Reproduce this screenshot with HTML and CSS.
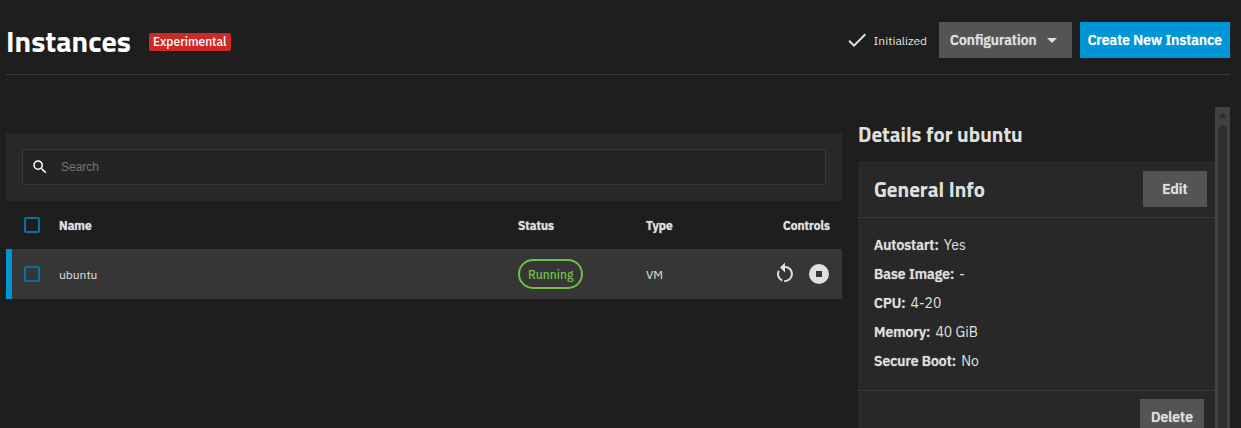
FILE: index.html
```html
<!DOCTYPE html>
<html lang="en">
<head>
  <meta charset="UTF-8" />
  <title>Instances</title>
  <meta name="viewport" content="width=device-width, initial-scale=1.0" />
  <link rel="stylesheet" href="styles.css">
</head>
<body>

<!-- Page header -->
<header class="page-header">
  <h1>Instances</h1>
  <span class="badge">Experimental</span>
  <div class="actions">
    <span class="state">
      <svg class="icon" width="24" height="24" viewBox="0 0 24 24"><path d="M9 16.2 4.8 12l-1.4 1.4L9 19 21 7l-1.4-1.4z"/></svg>
      Initialized
    </span>
    <button type="button" class="btn btn-config">
      Configuration
      <svg class="icon" width="24" height="24" viewBox="0 0 24 24"><path d="M7 10l5 5 5-5z"/></svg>
    </button>
    <button type="button" class="btn btn-primary">Create New Instance</button>
  </div>
</header>

<main class="layout">
  <!-- Instance list -->
  <section class="list">
    <div class="search-bar">
      <label class="search">
        <svg class="icon" width="18" height="18" viewBox="0 0 24 24"><path d="M15.5 14h-.79l-.28-.27A6.471 6.471 0 0 0 16 9.5 6.5 6.5 0 1 0 9.5 16c1.61 0 3.09-.59 4.23-1.57l.27.28v.79l5 4.99L20.49 19l-4.99-5zm-6 0C7.01 14 5 11.99 5 9.5S7.01 5 9.5 5 14 7.01 14 9.5 11.99 14 9.5 14z"/></svg>
        <input type="search" placeholder="Search" aria-label="Search" />
      </label>
    </div>

    <table class="instances">
      <thead>
        <tr>
          <th class="col-check"><input type="checkbox" class="check" aria-label="Select all" /></th>
          <th>Name</th>
          <th class="col-status">Status</th>
          <th class="col-type">Type</th>
          <th class="col-controls">Controls</th>
        </tr>
      </thead>
      <tbody>
        <tr class="selected">
          <td class="col-check"><input type="checkbox" class="check" aria-label="Select ubuntu" /></td>
          <td>ubuntu</td>
          <td class="col-status"><span class="status">Running</span></td>
          <td class="col-type">VM</td>
          <td class="col-controls">
            <div class="controls">
              <button type="button" class="icon-btn" aria-label="Restart">
                <svg class="icon" width="24" height="24" viewBox="0 0 24 24"><path d="M12 4C14.1 4 16.1 4.8 17.6 6.3C20.7 9.4 20.7 14.5 17.6 17.6C15.8 19.5 13.3 20.2 10.9 19.9L11.4 17.9C13.1 18.1 14.9 17.5 16.2 16.2C18.5 13.9 18.5 10.1 16.2 7.7C15.1 6.6 13.5 6 12 6V10.6L7 5.6L12 .6V4M6.3 17.6C3.7 15 3.3 11 5.1 7.9L6.6 9.4C5.5 11.6 5.9 14.4 7.8 16.2C8.3 16.7 8.9 17.1 9.6 17.4L9 19.4C8 19 7.1 18.4 6.3 17.6Z"/></svg>
              </button>
              <button type="button" class="icon-btn" aria-label="Stop">
                <svg class="icon" width="24" height="24" viewBox="0 0 24 24"><path fill-rule="evenodd" d="M12 2a10 10 0 1 0 0 20 10 10 0 0 0 0-20zM9 9h6v6H9z"/></svg>
              </button>
            </div>
          </td>
        </tr>
      </tbody>
    </table>
  </section>

  <!-- Details of the selected instance -->
  <aside class="details">
    <div class="details-content">
      <h2>Details for ubuntu</h2>
      <div class="card">
        <div class="card-header">
          <h3>General Info</h3>
          <button type="button" class="btn">Edit</button>
        </div>
        <dl class="info">
          <div><dt>Autostart:</dt><dd>Yes</dd></div>
          <div><dt>Base Image:</dt><dd>-</dd></div>
          <div><dt>CPU:</dt><dd>4-20</dd></div>
          <div><dt>Memory:</dt><dd>40 GiB</dd></div>
          <div><dt>Secure Boot:</dt><dd>No</dd></div>
        </dl>
        <div class="card-footer">
          <button type="button" class="btn">Delete</button>
        </div>
      </div>
    </div>
    <div class="scrollbar" aria-hidden="true">
      <svg width="9" height="7" viewBox="0 0 9 7"><path d="M4.5 1 8 6H1z"/></svg>
      <div class="thumb"></div>
    </div>
  </aside>
</main>

</body>
</html>
```
FILE: styles.css
```css
* {
  box-sizing: border-box;
}

body {
  display: flex;
  flex-direction: column;
  height: 100vh;
  margin: 0;
  padding: 0 11px 0 6px;
  overflow: hidden;
  background: #1e1e1e;
  color: #e0e0e0;
  font-family: "IBM Plex Sans", Roboto, sans-serif;
  font-size: 14px;
}

h1, h2, h3 {
  margin: 0;
  font-family: "Titillium Web", "Open Sans", sans-serif;
  font-weight: 700;
}

.icon {
  display: block;
  flex: none;
  fill: currentColor;
}

/* Header */
.page-header {
  display: flex;
  flex: none;
  align-items: center;
  margin-top: 10px;
  height: 65px;
  border-bottom: 1px solid #383838;
}

h1 {
  padding-bottom: 2px;
  color: #fff;
  font-size: 30px;
  line-height: 36px;
}

.badge {
  margin-left: 18px;
  padding: 0 4px;
  border-radius: 2px;
  background: #ce2929;
  color: #fff;
  font-size: 12px;
  font-weight: 500;
  line-height: 18px;
}

.actions {
  display: flex;
  align-items: center;
  gap: 8px;
  margin-left: auto;
  padding-bottom: 4px;
}

.state {
  display: flex;
  align-items: center;
  gap: 5px;
  margin-right: 4px;
  font-size: 12px;
}

.btn {
  display: flex;
  align-items: center;
  justify-content: center;
  min-width: 64px;
  height: 36px;
  padding: 0 8px;
  border: none;
  background: #545454;
  color: #e0e0e0;
  font: inherit;
  font-weight: 500;
  cursor: pointer;
}

.btn, th, dt {
  text-shadow: 0 0 1px currentColor;
}

.btn-config {
  gap: 3px;
  padding: 0 8px 0 11px;
}

.btn-primary {
  background: #0095d5;
  color: #fff;
}

/* Columns */
.layout {
  display: grid;
  flex: 1;
  grid-template-columns: 1fr 372px;
  gap: 16px;
  min-height: 0;
  padding-top: 32px;
}

.list {
  padding-top: 26px;
}

.search-bar {
  padding: 16px;
  background: #282828;
}

.search {
  display: flex;
  align-items: center;
  gap: 12px;
  height: 36px;
  padding: 0 8px;
  border: 1px solid #383838;
  background: #242424;
  color: #fff;
}

.search input {
  flex: 1;
  min-width: 0;
  padding: 0;
  border: none;
  outline: none;
  background: none;
  color: #fff;
  font-family: "Liberation Sans", Arial, sans-serif;
  font-size: 12px;
}

.search input::placeholder {
  color: #757575;
}

/* Table */
.instances {
  width: 100%;
  border-collapse: collapse;
  table-layout: fixed;
  font-size: 12px;
}

th, td {
  padding: 0;
  text-align: left;
}

th {
  height: 48px;
  font-weight: 600;
}

td {
  height: 50px;
}

.selected {
  background: #363636;
}

.selected .col-check {
  box-shadow: inset 6px 0 #0095d5;
}

.col-check {
  width: 53px;
  padding-left: 18px;
}

.col-status {
  width: 128px;
}

.col-type {
  width: 98px;
}

.col-controls {
  width: 98px;
  padding-right: 12px;
  text-align: right;
}

td.col-controls {
  padding-right: 11px;
}

.check {
  display: block;
  appearance: none;
  width: 16px;
  height: 16px;
  margin: 0;
  border: 2px solid #0b70a0;
  border-radius: 2px;
}

.status {
  display: inline-block;
  padding: 1px 8px 0;
  border: 2px solid #71bf44;
  border-radius: 15px;
  color: #71bf44;
  font-weight: 500;
  line-height: 25px;
}

.controls {
  display: flex;
  justify-content: flex-end;
  gap: 10px;
}

.icon-btn {
  padding: 0;
  border: none;
  background: none;
  color: #e0e0e0;
  cursor: pointer;
}

/* Details */
.details {
  display: flex;
  min-height: 0;
  overflow: hidden;
}

.details-content {
  flex: 1;
}

h2, h3 {
  font-size: 21px;
  line-height: 24px;
}

h2 {
  padding: 15px 0;
}

.card {
  background: #282828;
}

.card-header {
  display: flex;
  align-items: center;
  justify-content: space-between;
  height: 57px;
  padding: 0 8px 0 16px;
  border-bottom: 1px solid #383838;
}

.info {
  margin: 0;
  padding: 17px 16px 10px;
}

.info div {
  display: flex;
  gap: 5px;
  padding-bottom: 8px;
  line-height: 21px;
}

dt {
  font-weight: 500;
}

dd {
  margin: 0;
}

.card-footer {
  display: flex;
  justify-content: flex-end;
  padding: 8px 11px;
  border-top: 1px solid #383838;
}

.scrollbar {
  display: flex;
  flex-direction: column;
  align-items: center;
  width: 15px;
  padding-top: 5px;
  background: #424242;
}

.scrollbar svg {
  flex: none;
  fill: #303030;
  stroke: #303030;
  stroke-linejoin: round;
}

.thumb {
  flex: 1;
  width: 9px;
  margin-top: 6px;
  border-radius: 5px 5px 0 0;
  background: #303030;
}
```
